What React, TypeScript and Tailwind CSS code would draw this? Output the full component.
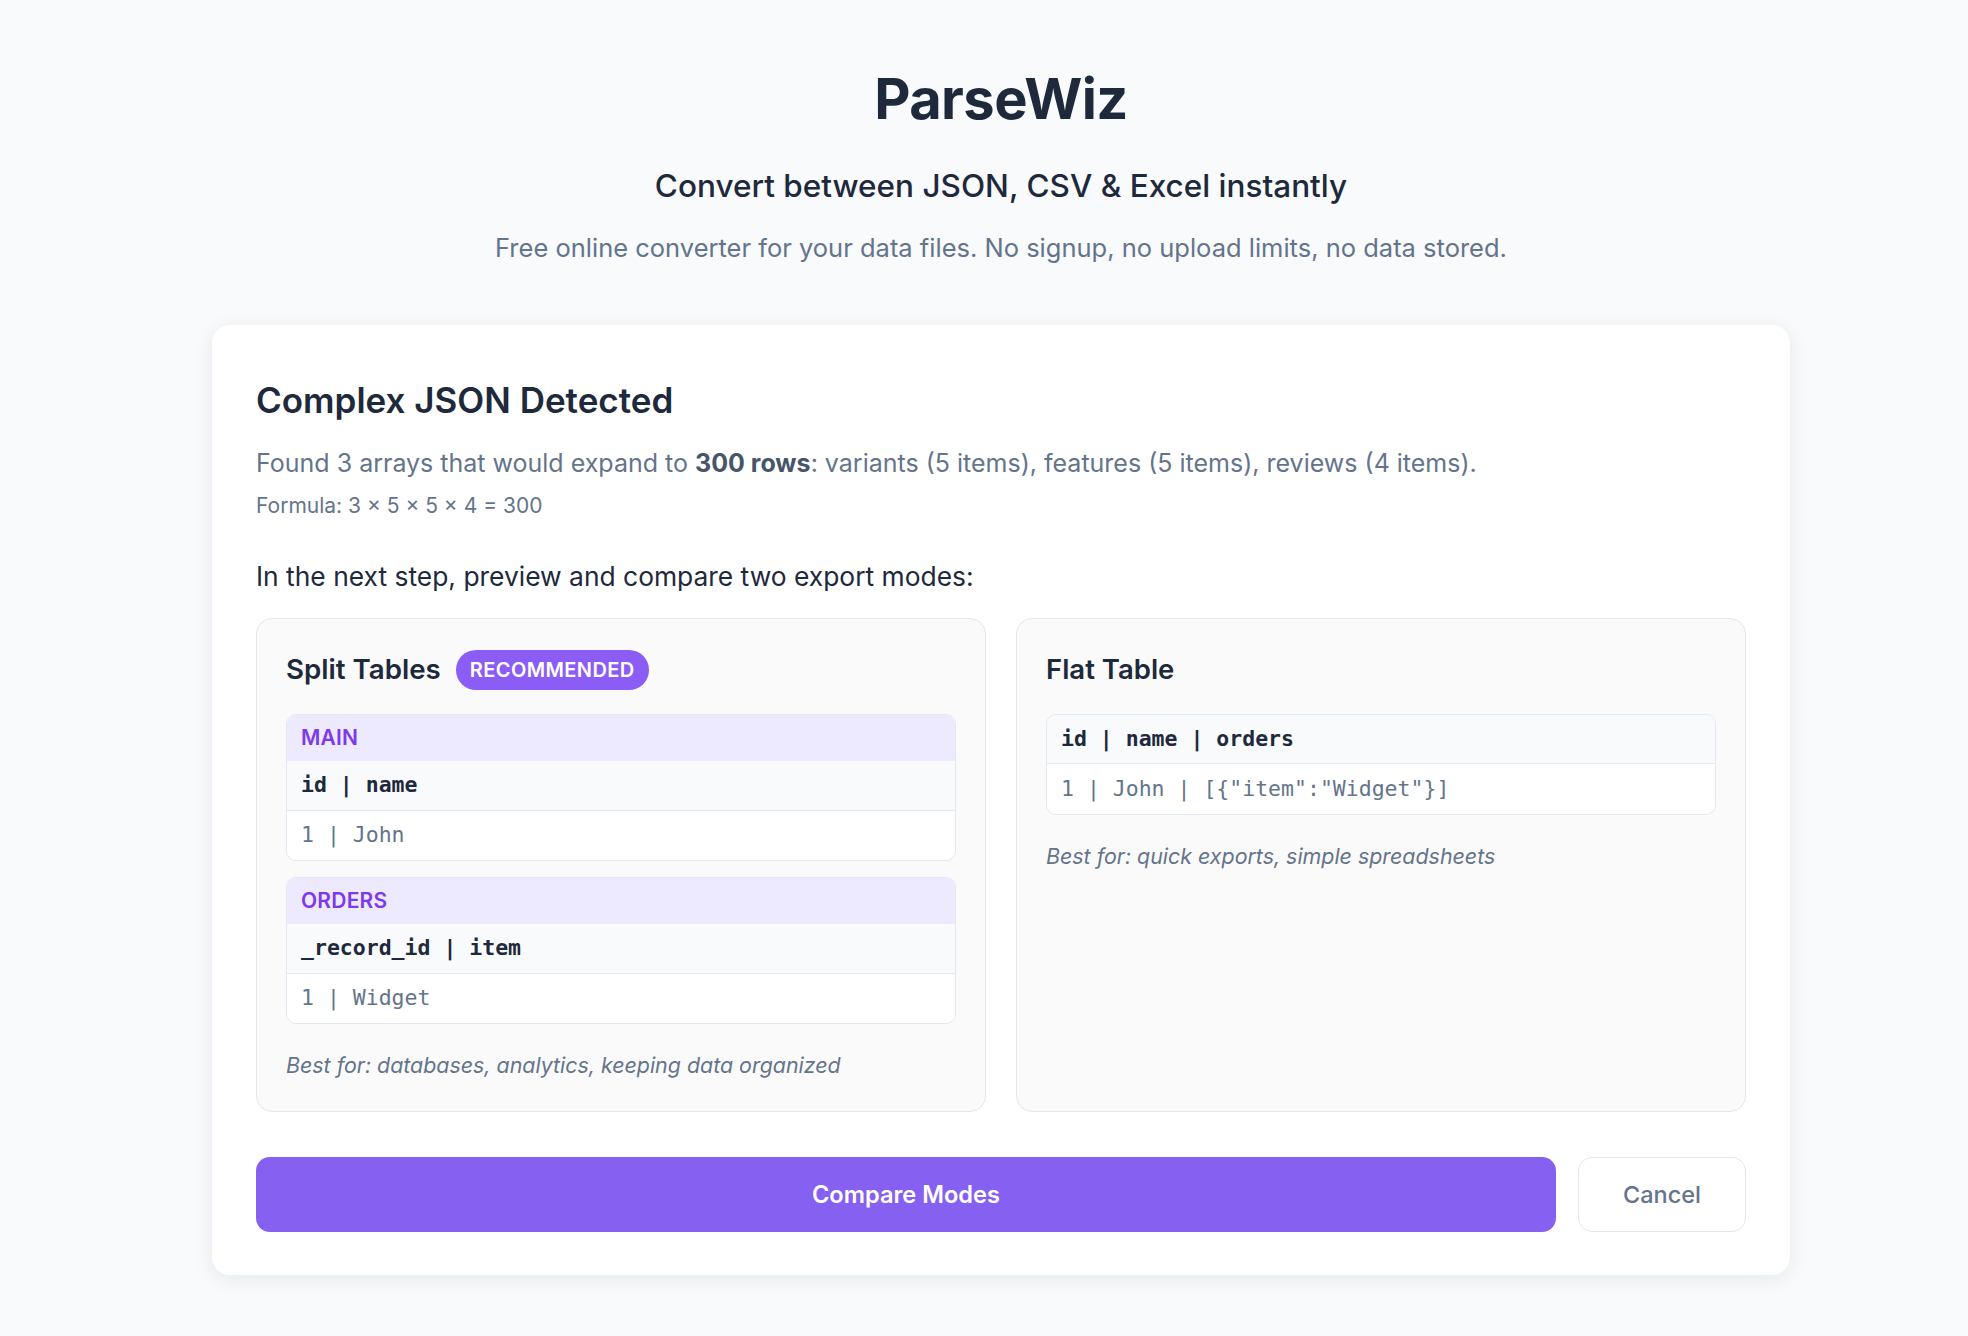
import React from "react";

function TableBox({ label, head, row }: { label?: string; head: string; row: string }) {
  return (
    <div className="rounded-[10px] border border-[#e2e8f0] overflow-hidden bg-white">
      {label && (
        <div className="h-[46px] flex items-center px-[14px] bg-[#ede9fe] text-[#7c3aed] font-semibold text-[21px] tracking-[0.01em]">
          {label}
        </div>
      )}
      <div className="h-[50px] flex items-center px-[14px] bg-[#f8fafc] border-b border-[#e2e8f0] font-['DejaVu_Sans_Mono',monospace] font-bold text-[21.5px] text-[#1e293b] whitespace-pre">
        {head}
      </div>
      <div className="h-[49px] flex items-center px-[14px] bg-white font-['DejaVu_Sans_Mono',monospace] text-[21.5px] text-[#64748b] whitespace-pre">
        {row}
      </div>
    </div>
  );
}

export default function App() {
  return (
    <div className="min-h-screen bg-[#f8fafc] font-['Inter',sans-serif] pl-[34px] pb-[62px]">
      <div className="w-[1578px] mx-auto pt-[70px]">
        <div className="text-center">
          <h1 className="text-[56px] leading-[58px] font-bold text-[#1e293b] tracking-[-0.01em]">ParseWiz</h1>
          <p className="mt-[38px] text-[31.5px] leading-[40px] font-medium text-[#1e293b]">
            Convert between JSON, CSV &amp; Excel instantly
          </p>
          <p className="mt-[24px] text-[25.5px] leading-[36px] text-[#64748b]">
            Free online converter for your data files. No signup, no upload limits, no data stored.
          </p>
        </div>

        <div className="mt-[59px] bg-white rounded-[18px] shadow-[0_4px_20px_rgba(15,23,42,0.08)] px-[44px] pt-[44px] pb-[43px]">
          <h2 className="text-[35px] leading-[62px] font-semibold text-[#1e293b]">Complex JSON Detected</h2>
          <p className="mt-[14px] text-[25px] leading-[36px] text-[#64748b]">
            Found 3 arrays that would expand to <span className="font-bold text-[#475569]">300 rows</span>: variants (5 items), features (5 items), reviews (4 items).
          </p>
          <p className="mt-[11px] text-[21px] leading-[28px] text-[#64748b]">Formula: 3 × 5 × 5 × 4 = 300</p>
          <p className="mt-[38px] text-[26.4px] leading-[36px] text-[#1e293b]">
            In the next step, preview and compare two export modes:
          </p>

          <div className="mt-[24px] grid grid-cols-2 gap-[30px]">
            <div className="rounded-[16px] border border-[#e2e8f0] bg-[#fafafa] px-[29px] pt-[29px] pb-[31px]">
              <div className="h-[44px] flex items-center gap-[15px]">
                <span className="text-[27.7px] font-semibold text-[#1e293b]">Split Tables</span>
                <span className="h-[40px] px-[14px] rounded-full bg-[#8b5cf6] text-white text-[20px] font-semibold flex items-center tracking-[0.02em]">
                  RECOMMENDED
                </span>
              </div>
              <div className="mt-[22px] flex flex-col gap-[16px]">
                <TableBox label="MAIN" head="id | name" row="1 | John" />
                <TableBox label="ORDERS" head="_record_id | item" row="1 | Widget" />
              </div>
              <p className="mt-[26px] text-[21.4px] leading-[30px] italic text-[#64748b]">
                Best for: databases, analytics, keeping data organized
              </p>
            </div>

            <div className="rounded-[16px] border border-[#e2e8f0] bg-[#fafafa] px-[29px] pt-[29px] pb-[31px]">
              <div className="h-[44px] flex items-center">
                <span className="text-[27.5px] font-semibold text-[#1e293b]">Flat Table</span>
              </div>
              <div className="mt-[22px]">
                <div className="rounded-[10px] border border-[#e2e8f0] overflow-hidden bg-white">
                  <div className="h-[49px] flex items-center px-[14px] bg-[#f8fafc] border-b border-[#e2e8f0] font-['DejaVu_Sans_Mono',monospace] font-bold text-[21.5px] text-[#1e293b] whitespace-pre">
                    id | name | orders
                  </div>
                  <div className="h-[50px] flex items-center px-[14px] bg-white font-['DejaVu_Sans_Mono',monospace] text-[21.5px] text-[#64748b] whitespace-pre">
                    {'1 | John | [{"item":"Widget"}]'}
                  </div>
                </div>
              </div>
              <p className="mt-[26px] text-[21.4px] leading-[30px] italic text-[#64748b]">
                Best for: quick exports, simple spreadsheets
              </p>
            </div>
          </div>

          <div className="mt-[45px] flex gap-[22px]">
            <button className="flex-1 h-[75px] rounded-[14px] bg-[#8660f0] text-white text-[23.6px] font-semibold">
              Compare Modes
            </button>
            <button className="w-[168px] h-[75px] rounded-[14px] border border-[#e2e8f0] bg-white text-[#64748b] text-[23.5px] font-medium">
              Cancel
            </button>
          </div>
        </div>
      </div>
    </div>
  );
}
